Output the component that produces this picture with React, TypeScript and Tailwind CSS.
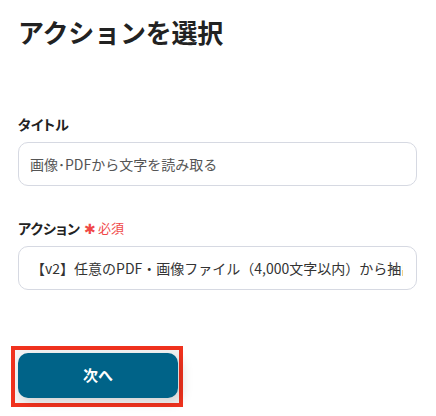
export default function App() {
  const jp = "font-['Noto_Sans_CJK_JP','Noto_Sans',sans-serif]";
  return (
    <div className={`w-[436px] h-[416px] bg-white overflow-hidden ${jp}`}>
      <div className="px-[18px] pt-[15px]">
        <h1 className="text-[26px] leading-[34px] font-bold text-[#222] tracking-[-0.2px]">アクションを選択</h1>

        <div className="mt-[65px] text-[14px] leading-[20px] font-bold text-[#222] [font-feature-settings:'palt']">タイトル</div>
        <div className="mt-[8px] h-[44px] w-[399px] rounded-[10px] border border-[#d6d9e2] flex items-center px-[11px] text-[14px] text-[#555]">
          画像･PDFから文字を読み取る
        </div>

        <div className="mt-[32px] flex items-center text-[14px] leading-[20px] font-bold text-[#222] [font-feature-settings:'palt']">
          <span>アクション</span>
          <span className="ml-[4px] text-[#f04848] font-normal text-[14px] leading-none">✱</span>
          <span className="ml-[2px] text-[#f04848] font-normal text-[13px]">必須</span>
        </div>
        <div className="relative mt-[8px] h-[44px] w-[399px] rounded-[10px] border border-[#d6d9e2] flex items-center pl-[12px] pr-[13px] overflow-hidden">
          <span className="whitespace-nowrap overflow-hidden text-[14px] text-[#333]">【v2】任意のPDF・画像ファイル（4,000文字以内）から抽出する</span>
          <svg className="absolute right-[17px] top-[17px]" width="10" height="8" viewBox="0 0 10 8" fill="none">
            <path d="M1.5 2.5 L5 6 L8.5 2.5" stroke="#666" strokeWidth="1.4" strokeLinecap="round" strokeLinejoin="round" />
          </svg>
        </div>

        <div className="mt-[56px] ml-[-7px] inline-block border-4 border-[#f0321e] pt-[3px] pb-[5px] pl-[3px] pr-[1px] bg-[#f4f4f4]">
          <button className="w-[160px] h-[45px] rounded-[10px] bg-[#006388] text-white text-[15px] font-bold shadow-[4px_4px_12px_rgba(0,0,0,0.15)] flex items-center justify-center">
            次へ
          </button>
        </div>
      </div>
    </div>
  );
}
